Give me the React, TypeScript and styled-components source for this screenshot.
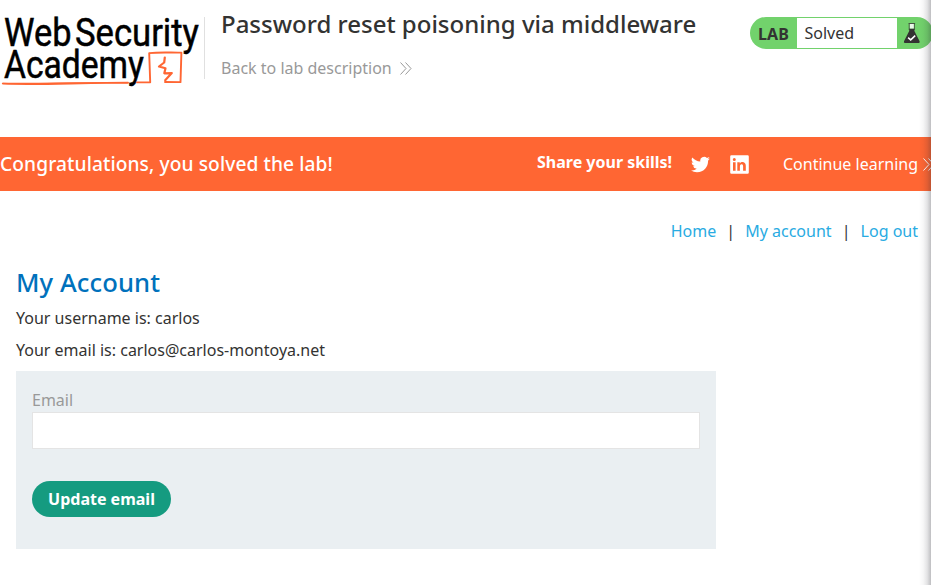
import React from 'react';
import styled, { createGlobalStyle } from 'styled-components';

const GlobalStyle = createGlobalStyle`
  * { box-sizing: border-box; }
  html, body { margin: 0; background: #fff; overflow: hidden; }
  body {
    font-family: "Noto Sans", sans-serif;
    font-size: 16px;
    line-height: 22px;
    color: #333332;
  }
`;

const Page = styled.div`
  position: relative;
  width: 931px;
  height: 585px;
  overflow: hidden;
`;

const EdgeShadow = styled.div`
  position: absolute;
  top: 0;
  right: 0;
  bottom: 0;
  width: 12px;
  pointer-events: none;
  background: linear-gradient(to right, rgba(40, 40, 50, 0), rgba(40, 40, 50, 0.04) 35%, rgba(40, 40, 50, 0.13) 68%, rgba(40, 40, 50, 0.3));
`;

const Header = styled.header`
  display: flex;
  align-items: flex-start;
  height: 137px;
`;

const Logo = styled.svg`
  flex: none;
  display: block;
  width: 204px;
  height: 95px;
  overflow: visible;
  font-family: Roboto, sans-serif;
  font-weight: 400;
  font-size: 38px;
`;

const Wordmark = styled.g`
  fill: #000;
  stroke: #000;
  stroke-width: 0.5px;
`;

const Titles = styled.div`
  flex: none;
  width: 546px;
  height: 62px;
  margin-top: 17px;
  padding-left: 16px;
  border-left: 1px solid #e0e0e0;
`;

const Title = styled.h2`
  margin: -10px 0 0;
  font-size: 24px;
  line-height: 33px;
  font-weight: 500;
  white-space: nowrap;
`;

const BackLink = styled.a`
  display: flex;
  align-items: center;
  gap: 8px;
  margin-top: 17px;
  color: #999;
`;

const Chevrons = styled.svg`
  flex: none;
  width: 12px;
  height: 13px;
  fill: none;
  stroke: currentColor;
  stroke-width: 1;
`;

const LabStatus = styled.div`
  flex: none;
  display: flex;
  width: 183px;
  height: 32px;
  margin-top: 17px;
  border-radius: 16px;
  overflow: hidden;
  background: #72d26c;
`;

const LabTag = styled.span`
  width: 47px;
  padding-left: 8px;
  line-height: 34px;
  font-weight: 700;
  letter-spacing: 0.15px;
`;

const LabState = styled.span`
  width: 100px;
  height: 30px;
  margin-top: 1px;
  padding-left: 7.5px;
  line-height: 31px;
  background: #fff;
`;

const Flask = styled.svg`
  width: 18px;
  height: 22px;
  margin: 5px 0 0 6px;
`;

const Banner = styled.section`
  display: flex;
  align-items: center;
  height: 54px;
  color: #fff;
  background: #ff6633;
  white-space: nowrap;
`;

const Congrats = styled.h4`
  flex: none;
  width: 537px;
  margin: 0;
  font-size: 19.2px;
  font-weight: 500;
  letter-spacing: 0.09px;
`;

const Share = styled.span`
  flex: none;
  width: 154px;
  margin-top: -4px;
  font-weight: 700;
`;

const SocialIcon = styled.svg`
  flex: none;
  width: 19px;
  height: 19px;
  margin-right: 20px;
  fill: #fff;
`;

const Continue = styled.a`
  display: flex;
  align-items: center;
  gap: 5px;
  margin-left: 14px;
`;

const Nav = styled.nav`
  display: flex;
  justify-content: flex-end;
  gap: 12px;
  padding: 29px 13px 0 0;
  height: 74px;
`;

const NavLink = styled.a`
  color: #29abe2;
`;

const Divider = styled.span`
  display: flex;
  justify-content: center;
  width: 5px;
`;

const Account = styled.main`
  width: 716px;
  padding-left: 16px;
`;

const Heading = styled.h1`
  margin: 0;
  font-size: 25.6px;
  line-height: 36px;
  font-weight: 500;
  letter-spacing: 0.1px;
  color: #0071bc;
`;

const Detail = styled.p`
  margin: 0 0 10px;
  &:first-of-type { margin-top: 6px; }
`;

const Form = styled.form`
  height: 178px;
  padding: 18px 16px;
  background: #eaeff2;
`;

const Label = styled.label`
  display: block;
  color: #999;
`;

const Input = styled.input`
  display: block;
  width: 668px;
  height: 37px;
  margin: 1px 0 32px;
  border: 1px solid #e4e4e4;
  border-radius: 0;
  background: #fff;
`;

const Submit = styled.button`
  display: block;
  width: 139px;
  height: 36px;
  padding: 0;
  border: 0;
  border-radius: 18px;
  background: #159b80;
  color: #fff;
  font: 700 16px/36px "Noto Sans", sans-serif;
`;

const DoubleArrow = () => (
  <Chevrons viewBox="0 0 12 13">
    <path d="M.5.5 6 6.5.5 12.5M5.5.5 11 6.5 5.5 12.5" />
  </Chevrons>
);

export default function App() {
  return (
    <Page>
      <GlobalStyle />
      <Header>
        <Logo viewBox="0 0 204 95">
          <Wordmark>
            <text x="4" y="45.5" textLength="67.5" lengthAdjust="spacingAndGlyphs">Web</text>
            <text x="75" y="45.5" textLength="124" lengthAdjust="spacingAndGlyphs">Security</text>
            <text x="4" y="78.3" textLength="140" lengthAdjust="spacingAndGlyphs">Academy</text>
          </Wordmark>
          <g fill="none" stroke="#ff6633" strokeLinejoin="round" strokeLinecap="round">
            <path d="M3 83.6C35 84.8 72 83.1 106 82.9L128 82.7M137 82.4 150.2 82.2 149.2 53.1C160 52 172 52.8 181.4 52.6L180.5 82.1 165 82" strokeWidth="1.9" />
            <path d="M2.5 83.4C40 83.4 80 82.5 127 82.6" strokeWidth="1.3" />
            <path d="M164.8 57.5 164.2 62.5 159 66.5 165.5 68.2 164.3 73.3 171.8 73.1 165.2 80.2" strokeWidth="2.2" />
          </g>
        </Logo>
        <Titles>
          <Title>Password reset poisoning via middleware</Title>
          <BackLink>Back to lab description <DoubleArrow /></BackLink>
        </Titles>
        <LabStatus>
          <LabTag>LAB</LabTag>
          <LabState>Solved</LabState>
          <Flask viewBox="0 0 18 22">
            <path d="M6.2 6.5V9L1 19.2Q.3 21 2 21H15.6Q17.3 21 16.6 19.2L11.4 9V6.5Z" fill="#333332" />
            <path d="M6.7 1.8h4.2V6.5H6.7Z" fill="#e9f8e8" />
            <path d="M6.2 2v6M11.4 2v6" stroke="#333332" strokeWidth=".7" />
            <path d="M5.5 1.5h6.6" stroke="#333332" strokeWidth=".8" />
            <path d="m5.1 15.6 2.6 2.3 4.5-4.3" fill="none" stroke="#fff" strokeWidth="1.5" />
          </Flask>
        </LabStatus>
      </Header>
      <Banner>
        <Congrats>Congratulations, you solved the lab!</Congrats>
        <Share>Share your skills!</Share>
        <SocialIcon viewBox="0 2 24 20">
          <path d="M23.95 4.57a10 10 0 0 1-2.82.77 4.96 4.96 0 0 0 2.16-2.72c-.95.55-2 .95-3.13 1.18a4.92 4.92 0 0 0-8.38 4.48C7.69 8.1 4.07 6.13 1.64 3.16a4.92 4.92 0 0 0 1.52 6.57 4.9 4.9 0 0 1-2.23-.61v.06a4.92 4.92 0 0 0 3.95 4.83 5 5 0 0 1-2.21.08 4.94 4.94 0 0 0 4.6 3.42A9.87 9.87 0 0 1 0 19.54a13.99 13.99 0 0 0 7.55 2.21c9.05 0 14-7.5 14-13.98 0-.21 0-.42-.02-.63a9.94 9.94 0 0 0 2.42-2.57Z" />
        </SocialIcon>
        <SocialIcon viewBox="0 0 19 19">
          <path fillRule="evenodd" d="M1.4.2H17.6Q18.8.2 18.8 1.4V17.6Q18.8 18.8 17.6 18.8H1.4Q.2 18.8.2 17.6V1.4Q.2.2 1.4.2ZM3 7.2V15.8H5.6V7.2ZM4.3 3.1A1.5 1.5 0 1 0 4.3 6.1 1.5 1.5 0 0 0 4.3 3.1ZM7.3 7.2V15.8H9.9V11.4C9.9 8.7 13.1 8.7 13.1 11.3V15.8H15.8V10.8C15.8 6.4 11.4 6.2 9.8 8.4V7.2Z" />
        </SocialIcon>
        <Continue>Continue learning <DoubleArrow /></Continue>
      </Banner>
      <Nav>
        <NavLink>Home</NavLink>
        <Divider>|</Divider>
        <NavLink>My account</NavLink>
        <Divider>|</Divider>
        <NavLink>Log out</NavLink>
      </Nav>
      <Account>
        <Heading>My Account</Heading>
        <Detail>Your username is: carlos</Detail>
        <Detail>Your email is: carlos@carlos-montoya.net</Detail>
        <Form>
          <Label htmlFor="email">Email</Label>
          <Input id="email" type="email" />
          <Submit type="button">Update email</Submit>
        </Form>
      </Account>
      <EdgeShadow />
    </Page>
  );
}
